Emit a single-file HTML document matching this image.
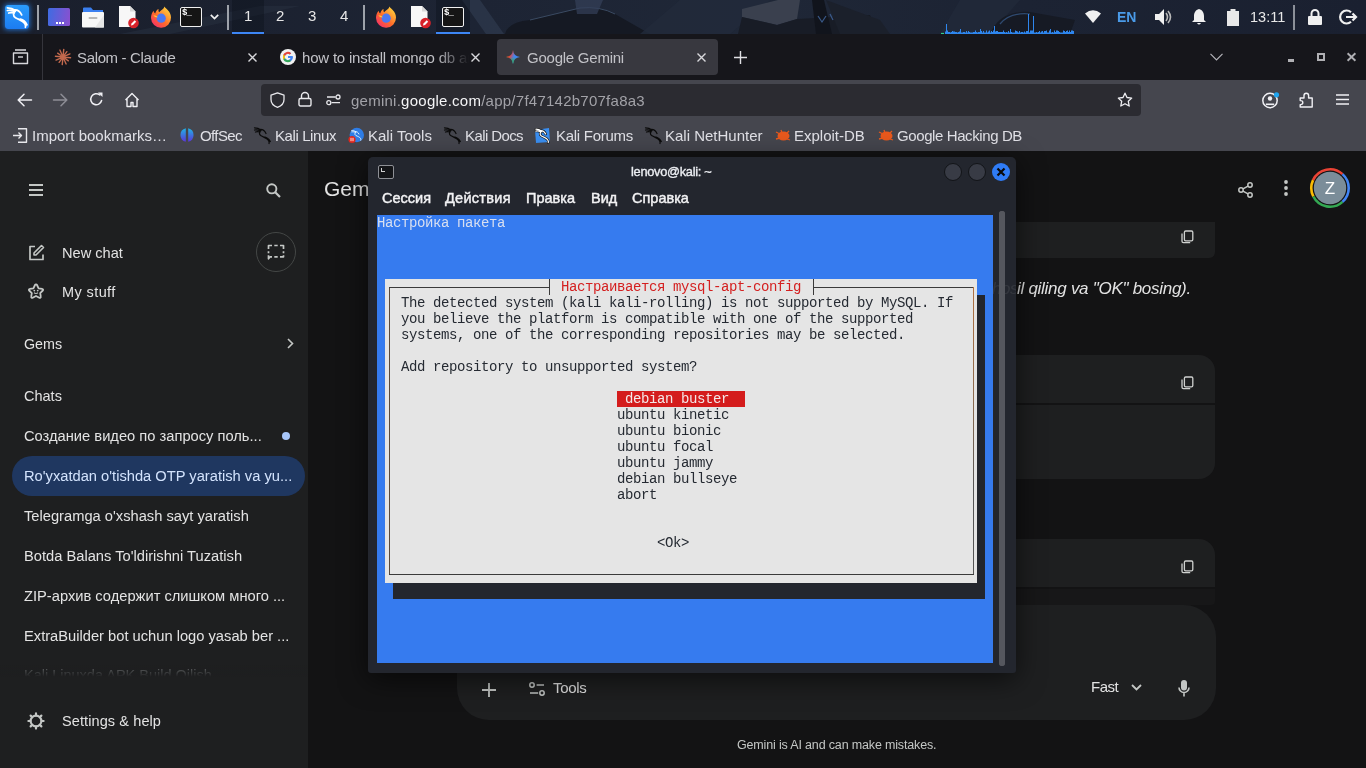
<!DOCTYPE html>
<html><head><meta charset="utf-8">
<style>
*{margin:0;padding:0;box-sizing:border-box}
html,body{width:1366px;height:768px;overflow:hidden;background:#131314;font-family:"Liberation Sans",sans-serif}
.a{position:absolute}
.t{position:absolute;white-space:nowrap;line-height:1;will-change:transform}
svg{position:absolute;overflow:visible}
/* panel */
#panel{left:0;top:0;width:1366px;height:34px;background:linear-gradient(90deg,#161c28 0%,#1b2230 30%,#222b3b 55%,#1a2231 75%,#141a26 100%)}
/* tabs */
#tabs{left:0;top:34px;width:1366px;height:46px;background:#16161b}
#nav{left:0;top:80px;width:1366px;height:38px;background:#45464e}
#bm{left:0;top:118px;width:1366px;height:33px;background:#45464e}
#side{left:0;top:151px;width:308px;height:617px;background:#1e1f20}
#main{left:308px;top:151px;width:1058px;height:617px;background:#131314}
.ff{color:#e0e0e6;font-size:15px}
.gs{color:#e3e3e3;font-size:14.5px}
.mono{font-family:"Liberation Mono",monospace;font-size:14px;letter-spacing:-0.4px;line-height:16px;white-space:pre;position:absolute;will-change:transform}
.tm{color:#f2f2f4;font-size:14.5px;-webkit-text-stroke:.45px #f2f2f4}
</style></head><body>

<div id="panel" class="a"></div>

<!-- PANEL ICONS -->
<svg style="left:0;top:0" width="1366" height="34" viewBox="0 0 1366 34">
<defs><linearGradient id="wg" x1="0" x2="1" y1="0" y2="0"><stop offset="0" stop-color="#1a1f2c"/><stop offset=".35" stop-color="#1d2434"/><stop offset=".55" stop-color="#1f2737"/><stop offset=".75" stop-color="#1c2333"/><stop offset="1" stop-color="#1a2030"/></linearGradient></defs>
<rect width="1366" height="34" fill="url(#wg)"/>
<path d="M120 34 L260 6 L300 6 L170 34z" fill="#2a3242" opacity=".45"/>
<path d="M462 0h18l24 34h-18z" fill="#2f3a4e" opacity=".7"/>
<path d="M505 34 Q508 22 530 20 L580 8 Q600 6 615 14 L650 34z" fill="#151923"/>
<path d="M530 20 L580 8 Q600 6 615 14" stroke="#3a4a62" stroke-width="1" fill="none"/>
<path d="M575 0h28l-6 14h-20z" fill="#34405a" opacity=".7"/>
<path d="M680 0h90l-40 34h-90z" fill="#222a3b" opacity=".8"/>
<path d="M742 9 L778 0 L800 0 L797 19 L777 25 L742 17z" fill="#3a404e"/>
<path d="M742 17 L777 25 L797 19 L870 15 L880 34 L738 34z" fill="#181c26"/>
<path d="M812 0h12l8 34h-16z" fill="#11141c"/>
<path d="M826 0 L880 20 L890 34 L840 34z" fill="#1b202b"/>
<path d="M818 16l4 6 4-6M830 14l3 6" stroke="#3a5a8a" stroke-width="1.2" fill="none"/>
<path d="M960 0h60l-30 34h-50z" fill="#232b3c" opacity=".6"/>
<path d="M990 34 Q1000 10 1030 12 L1075 20 L1070 34z" fill="#161a24"/>
<path d="M1000 24 Q1010 12 1030 14" stroke="#2f4a70" stroke-width="1.2" fill="none"/>
</svg>
<div class="a" style="left:5px;top:5px;width:24px;height:24px;background:linear-gradient(#2a9cfc,#1c7cf2);border-radius:3px;box-shadow:0 0 5px 1px rgba(40,140,255,.7)"></div>
<svg style="left:5px;top:5px" width="24" height="24" viewBox="0 0 24 24"><g transform="translate(1.8 1.8) scale(1.24)"><path d="M0.5 0.8C3 0.8 5 1.5 7 3M0.5 3C2.5 2.6 4.5 3 6 3.8M1.5 5C3 4.5 4.5 4.6 6 5M6 2.5C8.5 2.2 10.5 3.5 12 6.5M7 3.5C5 5 4.8 7.5 7 8.8C10 10.5 13 11 14.5 13.5C15.2 14.8 15.3 15.8 15 16.5M11 10C13 10.5 15 12 16.3 14.5" stroke="#fff" stroke-width="1.4" fill="none" stroke-linecap="round"/></g></svg>
<div class="a" style="left:37px;top:5px;width:2px;height:25px;background:#9da2aa"></div>
<div class="a" style="left:48px;top:8px;width:22px;height:17.5px;background:linear-gradient(100deg,#3d6ce2,#8c4fcf);border-radius:1.5px"></div>
<div class="a" style="left:56px;top:22px;width:2px;height:2px;background:#fff;box-shadow:3px 0 #fff,6px 0 #fff"></div>
<svg style="left:82px;top:7px" width="22" height="21" viewBox="0 0 22 21"><path d="M1 1.5q0-1 1-1h7l2 2.5h10v3H1z" fill="#3a7ff0"/><rect x="0" y="5" width="22" height="15.5" rx="1" fill="#f7f7f7"/><path d="M22 8v12.5H13z" fill="#e6e6e6"/><rect x="6.5" y="10" width="9" height="2" rx="1" fill="#b8b8b8"/></svg>
<svg style="left:118px;top:6px" width="22" height="23" viewBox="0 0 22 23"><path d="M1 0h11l5.5 5.5V21H1z" fill="#f7f7f7"/><path d="M12 0v5.5h5.5z" fill="#d8d8d8"/><circle cx="15.5" cy="17" r="5.3" fill="#d8222a"/><path d="M13 19.5l.5-2 3.2-3.2 1.5 1.5-3.2 3.2z" fill="#fff"/></svg><svg style="left:150px;top:6px" width="22" height="22" viewBox="0 0 22 22"><defs><linearGradient id="fx150" x1="0.1" y1="0.9" x2="0.8" y2="0.1"><stop offset="0" stop-color="#f5306a"/><stop offset=".45" stop-color="#ff6a2a"/><stop offset="1" stop-color="#ffc93a"/></linearGradient></defs><path d="M14.5 0.5c1 2.5 6.5 4.5 6.5 11a10 10 0 0 1-20 .5c0-3 1-5.5 2.6-7.3.3 1.3.9 2.3 1.6 2.8C6 5 7 3.5 8.6 3c-.3 1.2-.2 2.4.5 3.2 2-2.2 4.8-3 5.4-5.7z" fill="url(#fx150)"/><circle cx="11.2" cy="12.2" r="4.6" fill="#4a78f2"/><path d="M3.4 9.5c1.5-.2 3.5.3 4.5 1.7-1.8.2-3.6-.3-4.5-1.7z" fill="#ffd53a"/></svg><div class="a" style="left:180px;top:7px;width:22px;height:20px;background:#151515;border:1.3px solid #f0f0f0;border-radius:2px"></div><div class="t" style="left:182px;top:8.5px;color:#fff;font-size:9px;font-family:'Liberation Mono',monospace;font-weight:bold;letter-spacing:-.8px">$_</div>
<svg style="left:210px;top:14px" width="9" height="6" viewBox="0 0 9 6"><path d="M.8 .8l3.7 3.7L8.2 .8" stroke="#f0f0f0" stroke-width="1.7" fill="none"/></svg>
<div class="a" style="left:227px;top:5px;width:2px;height:25px;background:#9da2aa"></div>
<div class="a" style="left:232px;top:0px;width:32px;height:34px;background:rgba(10,14,22,.35)"></div>
<div class="a" style="left:232px;top:32px;width:32px;height:2px;background:#3d86f5"></div>
<div class="t" style="left:244px;top:8px;color:#e6e6e6;font-size:15px">1</div>
<div class="t" style="left:276px;top:8px;color:#e6e6e6;font-size:15px">2</div>
<div class="t" style="left:308px;top:8px;color:#e6e6e6;font-size:15px">3</div>
<div class="t" style="left:339.5px;top:8px;color:#e6e6e6;font-size:15px">4</div>
<div class="a" style="left:363px;top:5px;width:2px;height:25px;background:#9da2aa"></div><svg style="left:375px;top:6px" width="22" height="22" viewBox="0 0 22 22"><defs><linearGradient id="fx375" x1="0.1" y1="0.9" x2="0.8" y2="0.1"><stop offset="0" stop-color="#f5306a"/><stop offset=".45" stop-color="#ff6a2a"/><stop offset="1" stop-color="#ffc93a"/></linearGradient></defs><path d="M14.5 0.5c1 2.5 6.5 4.5 6.5 11a10 10 0 0 1-20 .5c0-3 1-5.5 2.6-7.3.3 1.3.9 2.3 1.6 2.8C6 5 7 3.5 8.6 3c-.3 1.2-.2 2.4.5 3.2 2-2.2 4.8-3 5.4-5.7z" fill="url(#fx375)"/><circle cx="11.2" cy="12.2" r="4.6" fill="#4a78f2"/><path d="M3.4 9.5c1.5-.2 3.5.3 4.5 1.7-1.8.2-3.6-.3-4.5-1.7z" fill="#ffd53a"/></svg><svg style="left:410px;top:6px" width="22" height="23" viewBox="0 0 22 23"><path d="M1 0h11l5.5 5.5V21H1z" fill="#f7f7f7"/><path d="M12 0v5.5h5.5z" fill="#d8d8d8"/><circle cx="15.5" cy="17" r="5.3" fill="#d8222a"/><path d="M13 19.5l.5-2 3.2-3.2 1.5 1.5-3.2 3.2z" fill="#fff"/></svg>
<div class="a" style="left:436px;top:0px;width:34px;height:34px;background:rgba(10,14,22,.35)"></div>
<div class="a" style="left:442px;top:7px;width:22px;height:20px;background:#151515;border:1.3px solid #f0f0f0;border-radius:2px"></div><div class="t" style="left:444px;top:8.5px;color:#fff;font-size:9px;font-family:'Liberation Mono',monospace;font-weight:bold;letter-spacing:-.8px">$_</div>
<div class="a" style="left:436px;top:32px;width:34px;height:2px;background:#3d86f5"></div>
<!-- netgraph -->
<svg style="left:940px;top:10px" width="136" height="24" viewBox="0 0 136 24"><path d="M1 23.5h3" stroke="#2fd08a" stroke-width="1.2"/><path d="M5.5 24v-2.5M6.5 24v-10M7.5 24v-3.5M8.5 24v-2M9.5 24v-2M10.5 24v-1.5M11.5 24v-2M12.5 24v-3M13.5 24v-2.5M14.5 24v-2.5M15.5 24v-2M16.5 24v-2M17.5 24v-1.5M18.5 24v-2M19.5 24v-2.5M20.5 24v-5M21.5 24v-1.5M22.5 24v-1.5M23.5 24v-2M24.5 24v-2M25.5 24v-1.5M26.5 24v-3M27.5 24v-1.5M28.5 24v-3M29.5 24v-2M30.5 24v-1.5M31.5 24v-1.5M32.5 24v-1.5M33.5 24v-2M34.5 24v-2M35.5 24v-3.5M36.5 24v-2M37.5 24v-1.5M38.5 24v-2M39.5 24v-2M40.5 24v-5M41.5 24v-3M42.5 24v-1.5M43.5 24v-3M44.5 24v-1.5M45.5 24v-1.5M46.5 24v-3.5M47.5 24v-1.5M48.5 24v-2.5M49.5 24v-3.5M50.5 24v-1.5M51.5 24v-3M52.5 24v-2M53.5 24v-3.5M54.5 24v-8M55.5 24v-2.5M56.5 24v-3M57.5 24v-3M58.5 24v-2M59.5 24v-2M60.5 24v-2M61.5 24v-2M62.5 24v-2M63.5 24v-3.5M64.5 24v-2M65.5 24v-1.5M66.5 24v-2M67.5 24v-1.5M68.5 24v-3M69.5 24v-1.5M70.5 24v-5M71.5 24v-2M72.5 24v-1.5M73.5 24v-1.5M74.5 24v-1.5M75.5 24v-3.5M76.5 24v-3M77.5 24v-2.5M78.5 24v-1.5M79.5 24v-3M80.5 24v-1.5M81.5 24v-2M82.5 24v-2M83.5 24v-1.5M84.5 24v-2.5M85.5 24v-1.5M86.5 24v-3M87.5 24v-3M88.5 24v-20M89.5 24v-1.5M90.5 24v-3.5M91.5 24v-3.5M92.5 24v-3.5M93.5 24v-18M94.5 24v-1.5M95.5 24v-1.5M96.5 24v-2M97.5 24v-1.5M98.5 24v-2M99.5 24v-3M100.5 24v-1.5M101.5 24v-2.5M102.5 24v-3M103.5 24v-1.5M104.5 24v-3M105.5 24v-3M106.5 24v-3.5M107.5 24v-1.5M108.5 24v-1.5M109.5 24v-3.5M110.5 24v-5M111.5 24v-1.5M112.5 24v-2M113.5 24v-1.5M114.5 24v-3.5M115.5 24v-2M116.5 24v-3.5M117.5 24v-3.5M118.5 24v-3M119.5 24v-2M120.5 24v-1.5M121.5 24v-1.5M122.5 24v-1.5M123.5 24v-3.5M124.5 24v-3M125.5 24v-2M126.5 24v-3M127.5 24v-3.5M128.5 24v-2M129.5 24v-3.5M130.5 24v-2M131.5 24v-3.5M132.5 24v-3.5M133.5 24v-3" stroke="#2e86ee" stroke-width="1"/></svg>
<svg style="left:1085px;top:10px" width="16" height="13" viewBox="0 0 16 13"><path d="M0 3.5Q8-3 16 3.5L8 13z" fill="#f0f0f0"/></svg>
<div class="t" style="left:1117px;top:10px;color:#4a9be8;font-size:14px;font-weight:bold">EN</div>
<svg style="left:1155px;top:9px" width="18" height="16" viewBox="0 0 18 16"><path d="M0 5h4l5-5v16l-5-5H0z" fill="#f0f0f0"/><path d="M11 4q3 4 0 8M13 2q5 6 0 12" stroke="#b8b8b8" stroke-width="1.6" fill="none"/></svg>
<svg style="left:1192px;top:9px" width="14" height="16" viewBox="0 0 14 16"><path d="M7 0C3.5 1 2 4 2 7v4l-2 2h14l-2-2V7c0-3-1.5-6-5-7zM5 14h4q-2 3-4 0z" fill="#f0f0f0"/></svg>
<svg style="left:1227px;top:9px" width="12" height="17" viewBox="0 0 12 17"><path d="M3.5 0h5v2H12v15H0V2h3.5z" fill="#e8e8e8"/></svg>
<div class="t" style="left:1250px;top:10px;color:#e8e8e8;font-size:14.5px">13:11</div>
<div class="a" style="left:1293px;top:5px;width:2px;height:25px;background:#8b9099"></div>
<svg style="left:1308px;top:9px" width="14" height="16" viewBox="0 0 14 16"><path d="M3.5 7V4.5a3.5 3.5 0 0 1 7 0V7" stroke="#f0f0f0" stroke-width="2" fill="none"/><rect x="0" y="7" width="14" height="9" rx="1" fill="#f0f0f0"/></svg>
<svg style="left:1340px;top:9px" width="17" height="16" viewBox="0 0 17 16"><path d="M11 3.2A6.5 6.5 0 1 0 11 12.8" stroke="#f0f0f0" stroke-width="2.2" fill="none"/><path d="M6 8h10M12.5 4.5 16 8l-3.5 3.5" stroke="#f0f0f0" stroke-width="2.2" fill="none"/></svg>
<div id="tabs" class="a"></div>
<div id="nav" class="a"></div>
<div id="bm" class="a"></div>
<div id="side" class="a"></div>
<div id="main" class="a"></div>

<!-- GEMINI SIDEBAR -->
<svg style="left:29px;top:184px" width="14" height="12" viewBox="0 0 14 12"><path d="M0 1h14M0 6h14M0 11h14" stroke="#c4c7c5" stroke-width="1.8"/></svg>
<svg style="left:266px;top:183px" width="15" height="15" viewBox="0 0 15 15"><circle cx="5.8" cy="5.8" r="4.6" stroke="#c4c7c5" stroke-width="1.9" fill="none"/><path d="M9.2 9.2 14 14" stroke="#c4c7c5" stroke-width="2.2"/></svg>
<svg style="left:28px;top:244px" width="17" height="17" viewBox="0 0 17 17"><path d="M7 2.5H2v13h13v-5" stroke="#c4c7c5" stroke-width="1.7" fill="none" stroke-linejoin="round"/><path d="M13.5 1.5l2 2L8 11H6V9z" stroke="#c4c7c5" stroke-width="1.6" fill="none" stroke-linejoin="round"/></svg>
<div class="t gs" style="left:62px;top:245.5px;font-size:14.6px">New chat</div>
<div class="a" style="left:256px;top:232px;width:40px;height:40px;border:1px solid #444746;border-radius:50%"></div>
<svg style="left:267px;top:244px" width="18" height="16" viewBox="0 0 18 16"><path d="M1.5 5V1.5H5M7.3 1.5h3.4M13 1.5h3.5V5M16.5 7.3v1.9M16.5 11.3v1.5H13M10.7 12.8H7.3M5 12.8H3.2L1.5 14.8V11.3M1.5 9.2V7.3" stroke="#c4c7c5" stroke-width="1.7" fill="none" stroke-linejoin="round"/></svg>
<svg style="left:26.5px;top:282.5px" width="18" height="17" viewBox="0 0 18 17"><path d="M9 1.3c.5 0 .8.3 1 .7l1.6 3.3 3.6.5c.9.1 1.2 1.1.6 1.7l-2.6 2.6.6 3.6c.2.9-.8 1.5-1.5 1.1L9 13l-3.3 1.8c-.8.4-1.7-.2-1.5-1.1l.6-3.6-2.6-2.6c-.6-.6-.3-1.6.6-1.7l3.6-.5L8 2c.2-.4.5-.7 1-.7z" stroke="#c4c7c5" stroke-width="1.8" fill="none" stroke-linejoin="round"/><circle cx="7.3" cy="7.6" r=".9" fill="#c4c7c5"/><circle cx="10.7" cy="7.6" r=".9" fill="#c4c7c5"/><path d="M7 9.8q2 1.3 4 0" stroke="#c4c7c5" stroke-width="1.1" fill="none"/></svg>
<div class="t gs" style="left:62px;top:284.5px;letter-spacing:.4px">My stuff</div>
<div class="t gs" style="left:24px;top:336.5px;font-size:14.3px">Gems</div>
<svg style="left:287px;top:338px" width="7" height="11" viewBox="0 0 7 11"><path d="M1 1l4.5 4.5L1 10" stroke="#c4c7c5" stroke-width="1.6" fill="none"/></svg>
<div class="t gs" style="left:24px;top:388.5px;font-size:14.5px">Chats</div>
<div class="t gs" style="left:24px;top:428.5px;font-size:14.7px">Создание видео по запросу поль...</div>
<div class="a" style="left:282px;top:432px;width:8px;height:8px;border-radius:50%;background:#a8c7fa"></div>
<div class="a" style="left:12px;top:456px;width:293px;height:40px;border-radius:20px;background:#1f3760"></div>
<div class="t gs" style="left:24px;top:468.5px;font-size:14.7px;color:#d3e3fd">Ro'yxatdan o'tishda OTP yaratish va yu...</div>
<div class="t gs" style="left:24px;top:508.5px;font-size:14.7px">Telegramga o'xshash sayt yaratish</div>
<div class="t gs" style="left:24px;top:548.5px;font-size:14.7px">Botda Balans To'ldirishni Tuzatish</div>
<div class="t gs" style="left:24px;top:588.5px;font-size:14.7px">ZIP-архив содержит слишком много ...</div>
<div class="t gs" style="left:24px;top:628.5px;font-size:14.7px">ExtraBuilder bot uchun logo yasab ber ...</div>
<div class="a" style="left:0;top:662px;width:308px;height:16px;overflow:hidden"><div class="t gs" style="left:24px;top:5.5px;font-size:14.5px;color:#6e7072">Kali Linuxda APK Build Qilish</div></div>
<div class="a" style="left:0;top:665px;width:308px;height:13px;background:linear-gradient(#1e1f2000,#1e1f20 90%)"></div>
<svg style="left:27px;top:712px" width="18" height="18" viewBox="0 0 18 18"><circle cx="9" cy="9" r="5.4" stroke="#c4c7c5" stroke-width="2.1" fill="none"/><path d="M9.00 3.50L9.00 1.40M12.89 5.11L14.37 3.63M14.50 9.00L16.60 9.00M12.89 12.89L14.37 14.37M9.00 14.50L9.00 16.60M5.11 12.89L3.63 14.37M3.50 9.00L1.40 9.00M5.11 5.11L3.63 3.63" stroke="#c4c7c5" stroke-width="2.2" stroke-linecap="round"/></svg>
<div class="t gs" style="left:62px;top:714px;letter-spacing:.1px">Settings &amp; help</div>

<!-- GEMINI MAIN -->
<div class="t gs" style="left:324px;top:178.3px;font-size:21px">Gemini</div>
<svg style="left:1238px;top:182px" width="15" height="16" viewBox="0 0 15 16"><circle cx="12" cy="3" r="2.2" stroke="#c4c7c5" stroke-width="1.5" fill="none"/><circle cx="3" cy="8" r="2.2" stroke="#c4c7c5" stroke-width="1.5" fill="none"/><circle cx="12" cy="13" r="2.2" stroke="#c4c7c5" stroke-width="1.5" fill="none"/><path d="M5 6.9l5-2.8M5 9.1l5 2.8" stroke="#c4c7c5" stroke-width="1.5"/></svg>
<svg style="left:1284px;top:180px" width="4" height="16" viewBox="0 0 4 16"><circle cx="2" cy="2" r="1.9" fill="#c4c7c5"/><circle cx="2" cy="8" r="1.9" fill="#c4c7c5"/><circle cx="2" cy="14" r="1.9" fill="#c4c7c5"/></svg>
<svg style="left:1310px;top:168px" width="40" height="40" viewBox="0 0 40 40"><g stroke-width="2.6" fill="none"><path d="M32.51 6.10A18.7 18.7 0 0 0 3.05 12.10" stroke="#ea4335"/><path d="M3.05 12.10A18.7 18.7 0 0 0 3.34 28.49" stroke="#fbbc04"/><path d="M3.34 28.49A18.7 18.7 0 0 0 32.51 33.90" stroke="#34a853"/><path d="M32.51 33.90A18.7 18.7 0 0 0 32.51 6.10" stroke="#4285f4"/></g><circle cx="20" cy="20" r="16.2" fill="#7b8d99"/></svg>
<div class="t" style="left:1310px;top:180px;width:40px;text-align:center;color:#fff;font-size:17px">Z</div>

<div class="a" style="left:458px;top:222px;width:757px;height:36px;background:#1e1f20;border-radius:0 0 6px 0"></div>
<svg style="left:1181px;top:230px" width="13" height="14" viewBox="0 0 13 14"><rect x="3.4" y="1" width="8.4" height="9.8" rx="1.3" stroke="#cfd1cf" stroke-width="1.3" fill="none"/><path d="M1 3.4V11.2Q1 12.6 2.4 12.6H9.2" stroke="#cfd1cf" stroke-width="1.3" fill="none"/></svg>
<div class="t" id="it1" style="left:1016.5px;top:280px;color:#e3e3e3;font-size:17px;letter-spacing:-.28px;font-style:italic">il qiling va "OK" bosing).</div>

<div class="a" style="left:458px;top:355px;width:757px;height:48px;background:#1e1f20;border-radius:16px 16px 0 0"></div>
<svg style="left:1181px;top:376px" width="13" height="14" viewBox="0 0 13 14"><rect x="3.4" y="1" width="8.4" height="9.8" rx="1.3" stroke="#cfd1cf" stroke-width="1.3" fill="none"/><path d="M1 3.4V11.2Q1 12.6 2.4 12.6H9.2" stroke="#cfd1cf" stroke-width="1.3" fill="none"/></svg>
<div class="a" style="left:458px;top:405px;width:757px;height:74px;background:#1e1f20;border-radius:0 0 16px 16px"></div>

<div class="a" style="left:458px;top:539px;width:757px;height:48px;background:#1e1f20;border-radius:16px 16px 0 0"></div>
<svg style="left:1181px;top:560px" width="13" height="14" viewBox="0 0 13 14"><rect x="3.4" y="1" width="8.4" height="9.8" rx="1.3" stroke="#cfd1cf" stroke-width="1.3" fill="none"/><path d="M1 3.4V11.2Q1 12.6 2.4 12.6H9.2" stroke="#cfd1cf" stroke-width="1.3" fill="none"/></svg>
<div class="a" style="left:458px;top:589px;width:757px;height:16px;background:#171718;border-radius:0 0 4px 0"></div>

<div class="a" style="left:457px;top:605px;width:759px;height:115px;background:#1e1f20;border-radius:32px"></div>
<svg style="left:482px;top:683px" width="14" height="14" viewBox="0 0 14 14"><path d="M7 0v14M0 7h14" stroke="#c4c7c5" stroke-width="1.8"/></svg>
<svg style="left:529px;top:682px" width="16" height="14" viewBox="0 0 16 14"><circle cx="3" cy="3" r="2.2" stroke="#c4c7c5" stroke-width="1.5" fill="none"/><circle cx="13" cy="11" r="2.2" stroke="#c4c7c5" stroke-width="1.5" fill="none"/><path d="M7.6 3h7.4M1 11h8.2" stroke="#c4c7c5" stroke-width="1.6"/></svg>
<div class="t gs" style="left:553px;top:680px;font-size:15px;letter-spacing:-.3px">Tools</div>
<div class="t gs" style="left:1091px;top:679px;font-size:15px;letter-spacing:-.5px">Fast</div>
<svg style="left:1131px;top:684px" width="11" height="7" viewBox="0 0 11 7"><path d="M1 1l4.5 4.5L10 1" stroke="#c4c7c5" stroke-width="1.8" fill="none"/></svg>
<svg style="left:1178px;top:680px" width="12" height="17" viewBox="0 0 12 17"><rect x="3" y="0" width="6" height="10.5" rx="3" fill="#c4c7c5"/><path d="M1 7.5a5 5 0 0 0 10 0M6 12.5v4" stroke="#c4c7c5" stroke-width="1.6" fill="none"/></svg>
<div class="t" style="left:737px;top:739px;color:#c4c7c5;font-size:12.5px;letter-spacing:-.16px">Gemini is AI and can make mistakes.</div>

<!-- TAB BAR -->
<svg style="left:12px;top:49px" width="17" height="16" viewBox="0 0 17 16"><path d="M3 1h11M1.5 4h14v10.5h-14z" stroke="#d8d8dc" stroke-width="1.4" fill="none" stroke-linejoin="round"/><path d="M6 8h5" stroke="#d8d8dc" stroke-width="1.4"/></svg>
<div class="a" style="left:42px;top:34px;width:1px;height:46px;background:#35353c"></div>
<svg style="left:55px;top:49px" width="16" height="16" viewBox="0 0 16 16"><path d="M10.19 8.22L15.56 8.76M10.03 9.46L13.36 11.85M8.90 10.01L11.12 14.93M7.75 10.49L7.24 15.56M6.72 9.79L4.15 13.36M5.72 9.03L1.07 11.12M5.81 7.78L0.44 7.24M5.97 6.54L2.64 4.15M7.10 5.99L4.88 1.07M8.25 5.51L8.76 0.44M9.28 6.21L11.85 2.64M10.28 6.97L14.93 4.88" stroke="#c46a4e" stroke-width="1.4" stroke-linecap="round"/><circle cx="8" cy="8" r="2.2" fill="#c46a4e"/></svg>
<div class="t ff" style="left:77px;top:49.5px;color:#c2c2c7;letter-spacing:-.35px">Salom - Claude</div>
<svg style="left:248px;top:53px" width="9" height="9" viewBox="0 0 9 9"><path d="M.5.5l8 8M8.5.5l-8 8" stroke="#d8d8dc" stroke-width="1.4"/></svg>
<svg style="left:280px;top:49px" width="16" height="16" viewBox="0 0 16 16"><circle cx="8" cy="8" r="8" fill="#f1f1f1"/><path d="M12.6 7H8v2h2.6a3 3 0 1 1-.8-3.4l1.4-1.4A5 5 0 1 0 13 8z" fill="#4285f4"/><path d="M3.3 5.6 5 6.9A3 3 0 0 1 9.8 5.6l1.4-1.4A5 5 0 0 0 3.3 5.6z" fill="#ea4335"/><path d="M3.3 10.4A5 5 0 0 0 11 12l-1.5-1.2A3 3 0 0 1 5 9.1z" fill="#34a853"/><path d="M3 8a5 5 0 0 0 .3 2.4L5 9.1a3 3 0 0 1 0-2.2L3.3 5.6A5 5 0 0 0 3 8z" fill="#fbbc05"/></svg>
<div class="t ff" style="left:302px;top:49.5px;letter-spacing:-.2px;width:167px;overflow:hidden;color:#c2c2c7;-webkit-mask-image:linear-gradient(90deg,#000 80%,transparent)">how to install mongo db and</div>
<svg style="left:471px;top:53px" width="9" height="9" viewBox="0 0 9 9"><path d="M.5.5l8 8M8.5.5l-8 8" stroke="#d8d8dc" stroke-width="1.4"/></svg>
<div class="a" style="left:497px;top:39px;width:221px;height:36px;background:#38383f;border-radius:4px"></div>
<svg style="left:506px;top:50px" width="14" height="14" viewBox="0 0 14 14"><defs><linearGradient id="gg" x1="0" y1="0.2" x2="1" y2="0.6"><stop offset="0" stop-color="#f0a020"/><stop offset=".3" stop-color="#ea4335"/><stop offset=".6" stop-color="#4285f4"/><stop offset="1" stop-color="#4285f4"/></linearGradient><linearGradient id="gg2" x1="0" y1="0" x2="0" y2="1"><stop offset=".5" stop-color="#34a853" stop-opacity="0"/><stop offset=".85" stop-color="#34a853"/></linearGradient></defs><path d="M7 0Q7.6 6.4 14 7 7.6 7.6 7 14 6.4 7.6 0 7 6.4 6.4 7 0z" fill="url(#gg)"/><path d="M7 0Q7.6 6.4 14 7 7.6 7.6 7 14 6.4 7.6 0 7 6.4 6.4 7 0z" fill="url(#gg2)"/></svg>
<div class="t ff" style="left:527px;top:49.5px;color:#c2c2c7;letter-spacing:-.24px">Google Gemini</div>
<svg style="left:697px;top:53px" width="9" height="9" viewBox="0 0 9 9"><path d="M.5.5l8 8M8.5.5l-8 8" stroke="#d8d8dc" stroke-width="1.4"/></svg>
<svg style="left:734px;top:51px" width="13" height="13" viewBox="0 0 13 13"><path d="M6.5 0v13M0 6.5h13" stroke="#e0e0e4" stroke-width="1.4"/></svg>
<svg style="left:1210px;top:53px" width="13" height="8" viewBox="0 0 13 8"><path d="M.5.8l6 6 6-6" stroke="#b4b4ba" stroke-width="1.2" fill="none"/></svg>
<div class="a" style="left:1288px;top:59px;width:6px;height:2.5px;background:#b0b0b4"></div>
<div class="a" style="left:1317px;top:53px;width:8px;height:8px;border:2px solid #b0b0b4;border-top-width:2.5px"></div>
<svg style="left:1347px;top:53px" width="9" height="8" viewBox="0 0 9 8"><path d="M.6.3l7.8 7.4M8.4.3L.6 7.7" stroke="#b0b0b4" stroke-width="1.9"/></svg>

<!-- NAV BAR -->
<svg style="left:17px;top:93px" width="15" height="14" viewBox="0 0 15 14"><path d="M14.5 7H1.5M7 1.2 1.2 7 7 12.8" stroke="#f0f0f4" stroke-width="1.5" fill="none" stroke-linecap="round" stroke-linejoin="round"/></svg>
<svg style="left:53px;top:93px" width="15" height="14" viewBox="0 0 15 14"><path d="M.5 7h13M8 1.2 13.8 7 8 12.8" stroke="#8e8e96" stroke-width="1.5" fill="none" stroke-linecap="round" stroke-linejoin="round"/></svg>
<svg style="left:89px;top:92px" width="15" height="15" viewBox="0 0 15 15"><path d="M12.6 8.5A5.5 5.5 0 1 1 10.8 3" stroke="#f0f0f4" stroke-width="1.5" fill="none" stroke-linecap="round"/><path d="M9 .5h4.5V5z" fill="#f0f0f4"/></svg>
<svg style="left:124px;top:92px" width="16" height="16" viewBox="0 0 16 16"><path d="M1.5 8 8 1.5 14.5 8M3 6.5v8h4v-4h2v4h4v-8" stroke="#f0f0f4" stroke-width="1.4" fill="none" stroke-linejoin="round"/></svg>
<div class="a" style="left:261px;top:84px;width:880px;height:32px;background:#2b2b31;border-radius:4px"></div>
<svg style="left:270px;top:92px" width="15" height="16" viewBox="0 0 15 16"><path d="M7.5.8 14 3.2v4.3c0 3.7-2.7 6.5-6.5 7.8C3.7 14 1 11.2 1 7.5V3.2z" stroke="#e8e8ec" stroke-width="1.3" fill="none" stroke-linejoin="round"/></svg>
<svg style="left:298px;top:91px" width="14" height="16" viewBox="0 0 14 16"><path d="M3.5 7.5V5a3.5 3.5 0 0 1 7 0v2.5" stroke="#e8e8ec" stroke-width="1.4" fill="none"/><rect x="1" y="7.5" width="12" height="7.5" rx="1.5" stroke="#e8e8ec" stroke-width="1.4" fill="none"/></svg>
<svg style="left:326px;top:94px" width="15" height="12" viewBox="0 0 15 12"><circle cx="2.8" cy="8.7" r="2" stroke="#e8e8ec" stroke-width="1.3" fill="none"/><circle cx="12" cy="3" r="2" stroke="#e8e8ec" stroke-width="1.3" fill="none"/><path d="M1 3h8.5M5.5 8.7H14" stroke="#e8e8ec" stroke-width="1.3"/></svg>
<div class="t ff" style="left:351px;top:92.5px;color:#a2a2a8;letter-spacing:.25px"><span>gemini.</span><span style="color:#f4f4f6">google.com</span>/app/7f47142b707fa8a3</div>
<svg style="left:1117px;top:92px" width="16" height="16" viewBox="0 0 16 16"><path d="M8 1.2l2 4.3 4.7.6-3.4 3.2.9 4.7L8 11.7 3.8 14l.9-4.7L1.3 6.1 6 5.5z" stroke="#f0f0f4" stroke-width="1.3" fill="none" stroke-linejoin="round"/></svg>
<svg style="left:1262px;top:92px" width="18" height="17" viewBox="0 0 18 17"><circle cx="8" cy="8.5" r="7.2" stroke="#f0f0f4" stroke-width="1.5" fill="none"/><circle cx="8" cy="6.5" r="2.2" fill="#f0f0f4"/><path d="M3.8 11.5h8.4v1.6H3.8z" fill="#f0f0f4"/><circle cx="14.5" cy="2.8" r="2.6" fill="#1fa5f0"/></svg>
<svg style="left:1299px;top:91px" width="15" height="17" viewBox="0 0 15 17"><path d="M1.2 16h12V7H9.6V4.6a2.3 2.3 0 0 0-4.6 0V7H1.2v2.6h.6a2 2 0 0 1 0 4h-.6z" stroke="#f0f0f4" stroke-width="1.4" fill="none" stroke-linejoin="round"/></svg>
<svg style="left:1336px;top:94px" width="13" height="11" viewBox="0 0 13 11"><path d="M0 1h13M0 5.5h13M0 10h13" stroke="#f0f0f4" stroke-width="1.4"/></svg>

<!-- BOOKMARKS -->
<svg style="left:12px;top:128px" width="16" height="15" viewBox="0 0 16 15"><path d="M6 .8h8.5v13.4H6M1 7.5h8.5M6.5 4.5l3 3-3 3" stroke="#e8e8ec" stroke-width="1.4" fill="none" stroke-linejoin="round"/></svg>
<div class="t ff" style="left:32px;top:128px">Import bookmarks…</div>
<svg style="left:179px;top:127px" width="16" height="16" viewBox="0 0 16 16"><defs><linearGradient id="os" x1="0" y1="0" x2="0" y2="1"><stop offset="0" stop-color="#1fb5e8"/><stop offset="1" stop-color="#5a35d8"/></linearGradient></defs><path d="M6.8 1.2A7 7 0 0 0 6.8 14.8zM9.2 1.2A7 7 0 0 1 9.2 14.8z" fill="url(#os)"/><path d="M8 1v15" stroke="url(#os)" stroke-width="1"/></svg>
<div class="t ff" style="left:200px;top:128px;letter-spacing:-.6px">OffSec</div>
<svg style="left:254px;top:127px" width="17" height="17" viewBox="0 0 17 17"><path d="M0.5 0.8C3 0.8 5 1.5 7 3M0.5 3C2.5 2.6 4.5 3 6 3.8M1.5 5C3 4.5 4.5 4.6 6 5M6 2.5C8.5 2.2 10.5 3.5 12 6.5M7 3.5C5 5 4.8 7.5 7 8.8C10 10.5 13 11 14.5 13.5C15.2 14.8 15.3 15.8 15 16.5M11 10C13 10.5 15 12 16.3 14.5" stroke="#0a0a0a" stroke-width="1.25" fill="none" stroke-linecap="round"/></svg>
<div class="t ff" style="left:275px;top:128px;letter-spacing:-.4px">Kali Linux</div>
<svg style="left:348px;top:127px" width="16" height="17" viewBox="0 0 16 17"><circle cx="8.8" cy="8" r="7.2" fill="#2e7de6"/><g transform="translate(3.5 3) scale(.62)"><path d="M0.5 0.8C3 0.8 5 1.5 7 3M0.5 3C2.5 2.6 4.5 3 6 3.8M6 2.5C8.5 2.2 10.5 3.5 12 6.5M7 3.5C5 5 4.8 7.5 7 8.8C10 10.5 13 11 14.5 13.5C15.2 14.8 15.3 15.8 15 16.5" stroke="#dff0ff" stroke-width="1.6" fill="none" stroke-linecap="round"/></g><circle cx="4" cy="12.5" r="3.6" fill="#e0281e"/><path d="M3 10.8v3.4M5 10.8v3.4" stroke="#fff" stroke-width=".9"/></svg>
<div class="t ff" style="left:368px;top:128px">Kali Tools</div>
<svg style="left:444px;top:127px" width="17" height="17" viewBox="0 0 17 17"><path d="M0.5 0.8C3 0.8 5 1.5 7 3M0.5 3C2.5 2.6 4.5 3 6 3.8M1.5 5C3 4.5 4.5 4.6 6 5M6 2.5C8.5 2.2 10.5 3.5 12 6.5M7 3.5C5 5 4.8 7.5 7 8.8C10 10.5 13 11 14.5 13.5C15.2 14.8 15.3 15.8 15 16.5M11 10C13 10.5 15 12 16.3 14.5" stroke="#0a0a0a" stroke-width="1.25" fill="none" stroke-linecap="round"/></svg>
<div class="t ff" style="left:465px;top:128px;letter-spacing:-.6px">Kali Docs</div>
<svg style="left:534px;top:127px" width="17" height="17" viewBox="0 0 17 17"><path d="M1 3l14-2 1 14-14 1z" fill="#3a8ef0"/><g transform="translate(1.5 1.5) scale(.85)"><path d="M0.5 0.8C3 0.8 5 1.5 7 3M0.5 3C2.5 2.6 4.5 3 6 3.8M6 2.5C8.5 2.2 10.5 3.5 12 6.5M7 3.5C5 5 4.8 7.5 7 8.8C10 10.5 13 11 14.5 13.5C15.2 14.8 15.3 15.8 15 16.5" stroke="#111" stroke-width="3" fill="none" stroke-linecap="round"/><path d="M0.5 0.8C3 0.8 5 1.5 7 3M0.5 3C2.5 2.6 4.5 3 6 3.8M6 2.5C8.5 2.2 10.5 3.5 12 6.5M7 3.5C5 5 4.8 7.5 7 8.8C10 10.5 13 11 14.5 13.5C15.2 14.8 15.3 15.8 15 16.5" stroke="#fff" stroke-width="1.5" fill="none" stroke-linecap="round"/></g></svg>
<div class="t ff" style="left:556px;top:128px;letter-spacing:-.27px">Kali Forums</div>
<svg style="left:645px;top:127px" width="17" height="17" viewBox="0 0 17 17"><path d="M0.5 0.8C3 0.8 5 1.5 7 3M0.5 3C2.5 2.6 4.5 3 6 3.8M1.5 5C3 4.5 4.5 4.6 6 5M6 2.5C8.5 2.2 10.5 3.5 12 6.5M7 3.5C5 5 4.8 7.5 7 8.8C10 10.5 13 11 14.5 13.5C15.2 14.8 15.3 15.8 15 16.5M11 10C13 10.5 15 12 16.3 14.5" stroke="#0a0a0a" stroke-width="1.25" fill="none" stroke-linecap="round"/></svg>
<div class="t ff" style="left:665px;top:128px">Kali NetHunter</div>
<svg style="left:775px;top:128px" width="16" height="15" viewBox="0 0 16 15"><ellipse cx="8.5" cy="8" rx="6" ry="4.5" fill="#e8581c"/><path d="M1 4l4 2M1 11l4-1M14 3l-2 2M15 12l-3-1M6 2l1 3" stroke="#e8581c" stroke-width="1.3"/></svg>
<div class="t ff" style="left:794px;top:128px">Exploit-DB</div>
<svg style="left:878px;top:128px" width="16" height="15" viewBox="0 0 16 15"><ellipse cx="8.5" cy="8" rx="6" ry="4.5" fill="#e8581c"/><path d="M1 4l4 2M1 11l4-1M14 3l-2 2M15 12l-3-1M6 2l1 3" stroke="#e8581c" stroke-width="1.3"/></svg>
<div class="t ff" style="left:897px;top:128px;letter-spacing:-.4px">Google Hacking DB</div>


<!-- TERMINAL -->
<div class="a" style="left:368px;top:157px;width:648px;height:516px;background:#23262e;border-radius:5px 5px 3px 3px;box-shadow:0 6px 28px rgba(0,0,0,.6)"></div>
<div class="a" style="left:378px;top:165px;width:16px;height:14px;border:1.5px solid #8e9096;border-radius:2px;background:#141518"></div>
<div class="a" style="left:381px;top:167.5px;width:1px;height:4px;background:#d0d0d0"></div><div class="a" style="left:382px;top:171px;width:3px;height:1px;background:#d0d0d0"></div>
<div class="t" id="ttl" style="left:631px;top:166px;color:#eceef2;font-size:12.8px;letter-spacing:-.28px;-webkit-text-stroke:.35px #eceef2">lenovo@kali: ~</div>
<div class="a" style="left:944px;top:163px;width:18px;height:18px;border-radius:50%;background:#383b45;border:1.5px solid #121418"></div>
<div class="a" style="left:968px;top:163px;width:18px;height:18px;border-radius:50%;background:#383b45;border:1.5px solid #121418"></div>
<div class="a" style="left:992px;top:163px;width:18px;height:18px;border-radius:50%;background:#2f7cf6"></div>
<svg style="left:996px;top:167px" width="10" height="10" viewBox="0 0 10 10"><path d="M1.5 1.5l7 7M8.5 1.5l-7 7" stroke="#0a0a0a" stroke-width="2.2"/></svg>
<div class="t tm" style="left:382px;top:191px">Сессия</div>
<div class="t tm" style="left:445px;top:191px;letter-spacing:.28px">Действия</div>
<div class="t tm" style="left:526px;top:191px">Правка</div>
<div class="t tm" style="left:591px;top:191px">Вид</div>
<div class="t tm" style="left:632px;top:191px">Справка</div>
<div class="a" style="left:377px;top:215px;width:616px;height:448px;background:#367bef"></div>
<div class="a" style="left:999px;top:211px;width:6px;height:455px;border-radius:3px;background:#55575e"></div>
<div class="a" style="left:993px;top:270px;width:23px;height:30px;overflow:hidden"><div class="t" style="left:-1px;top:10px;color:rgba(227,227,227,.09);font-size:17px;letter-spacing:-.4px;font-style:italic">hos</div></div>
<div class="a" style="left:999px;top:211px;width:6px;height:455px;border-radius:3px;background:#55575e"></div>
<!-- dialog shadow -->
<div class="a" style="left:393px;top:295px;width:592px;height:304px;background:#23262e"></div>
<!-- dialog -->
<div class="a" style="left:385px;top:279px;width:592px;height:304px;background:#e5e5e5"></div>
<div class="a" style="left:389px;top:287px;width:1px;height:288px;background:#5a4a3a"></div>
<div class="a" style="left:389px;top:287px;width:161px;height:1px;background:#3a3a3a"></div>
<div class="a" style="left:549px;top:279px;width:1px;height:16px;background:#3a3a3a"></div>
<div class="a" style="left:813px;top:279px;width:1px;height:16px;background:#3a3a3a"></div>
<div class="a" style="left:813px;top:287px;width:161px;height:1px;background:#3a3a3a"></div>
<div class="a" style="left:973px;top:287px;width:1px;height:288px;background:linear-gradient(#b07040,#8a6a50 40%,#555 70%)"></div>
<div class="a" style="left:389px;top:574px;width:585px;height:1px;background:#3a3a3a"></div>
<div class="a" style="left:617px;top:391px;width:128px;height:16px;background:#d41c1c"></div>
<div class="mono" style="left:377px;top:215px;color:#d8dff0">Настройка пакета</div>
<div class="mono" style="left:561px;top:279px;color:#d42020">Настраивается mysql-apt-config</div>
<div class="mono" style="left:401px;top:295px;color:#252a32">The detected system (kali kali-rolling) is not supported by MySQL. If
you believe the platform is compatible with one of the supported
systems, one of the corresponding repositories may be selected.

Add repository to unsupported system?</div>
<div class="mono" style="left:625px;top:391px;color:#f4e8e8">debian buster</div>
<div class="mono" style="left:617px;top:407px;color:#252a32">ubuntu kinetic
ubuntu bionic
ubuntu focal
ubuntu jammy
debian bullseye
abort</div>
<div class="mono" style="left:657px;top:535px;color:#252a32">&lt;Ok&gt;</div>
</body></html>
